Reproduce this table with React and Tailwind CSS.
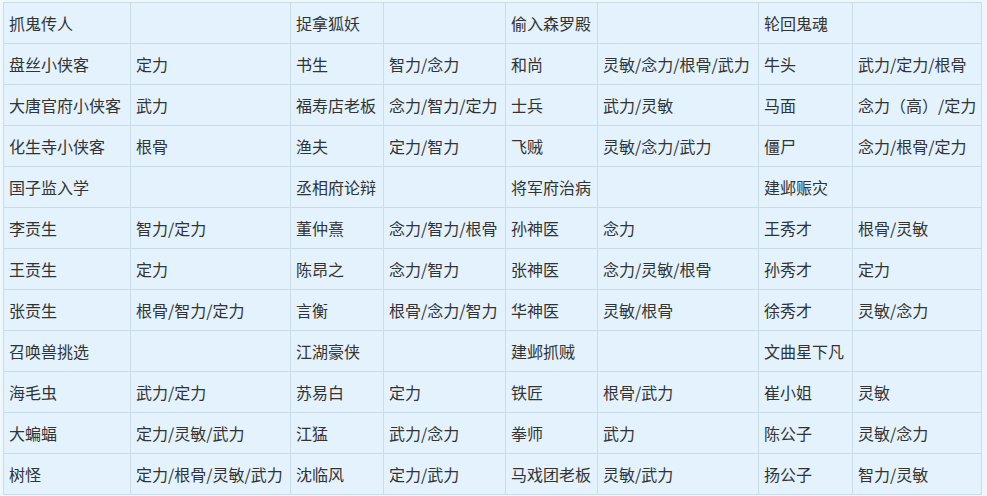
const WIDTHS = [127, 160, 93, 122, 92, 161, 94, 125];

const ROWS = [
  ['抓鬼传人', '', '捉拿狐妖', '', '偷入森罗殿', '', '轮回鬼魂', ''],
  ['盘丝小侠客', '定力', '书生', '智力/念力', '和尚', '灵敏/念力/根骨/武力', '牛头', '武力/定力/根骨'],
  ['大唐官府小侠客', '武力', '福寿店老板', '念力/智力/定力', '士兵', '武力/灵敏', '马面', '念力（高）/定力'],
  ['化生寺小侠客', '根骨', '渔夫', '定力/智力', '飞贼', '灵敏/念力/武力', '僵尸', '念力/根骨/定力'],
  ['国子监入学', '', '丞相府论辩', '', '将军府治病', '', '建邺赈灾', ''],
  ['李贡生', '智力/定力', '董仲熹', '念力/智力/根骨', '孙神医', '念力', '王秀才', '根骨/灵敏'],
  ['王贡生', '定力', '陈昂之', '念力/智力', '张神医', '念力/灵敏/根骨', '孙秀才', '定力'],
  ['张贡生', '根骨/智力/定力', '言衡', '根骨/念力/智力', '华神医', '灵敏/根骨', '徐秀才', '灵敏/念力'],
  ['召唤兽挑选', '', '江湖豪侠', '', '建邺抓贼', '', '文曲星下凡', ''],
  ['海毛虫', '武力/定力', '苏易白', '定力', '铁匠', '根骨/武力', '崔小姐', '灵敏'],
  ['大蝙蝠', '定力/灵敏/武力', '江猛', '武力/念力', '拳师', '武力', '陈公子', '灵敏/念力'],
  ['树怪', '定力/根骨/灵敏/武力', '沈临风', '定力/武力', '马戏团老板', '灵敏/武力', '扬公子', '智力/灵敏'],
];

export default function App() {
  return (
    <div
      className="h-[496px] w-[987px] overflow-hidden bg-[#eef7fc] pl-[3px] pt-[2px]"
      style={{ fontFamily: '"Noto Sans CJK SC", "Noto Sans", sans-serif' }}
    >
      <table className="table-fixed border-collapse bg-[#e3f2fc] text-[16px] text-[#333333]">
        <colgroup>
          {WIDTHS.map((w, i) => (
            <col key={i} style={{ width: w }} />
          ))}
        </colgroup>
        <tbody>
          {ROWS.map((row, r) => (
            <tr key={r} className="h-[41px]">
              {row.map((cell, c) => (
                <td
                  key={c}
                  className="whitespace-nowrap border border-[#c9dce8] px-[5px] align-middle leading-none"
                >
                  {cell}
                </td>
              ))}
            </tr>
          ))}
        </tbody>
      </table>
    </div>
  );
}
